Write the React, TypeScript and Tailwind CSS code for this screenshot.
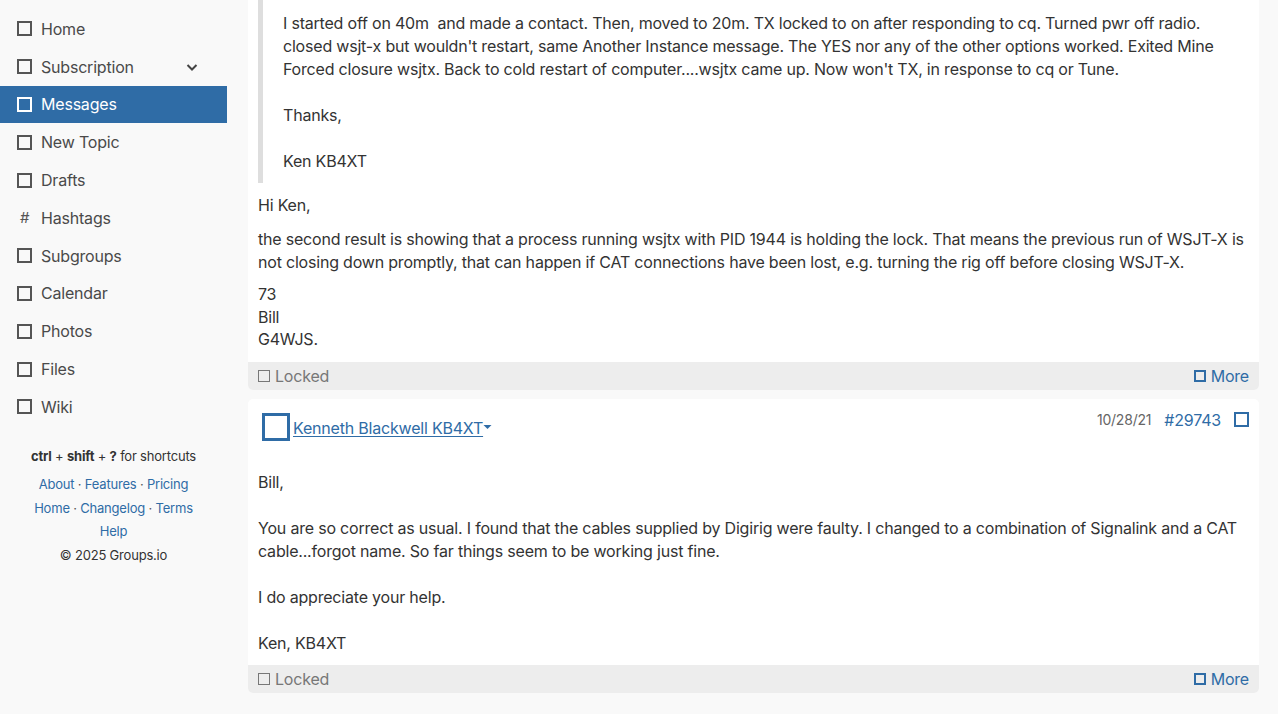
import React from "react";

const Box = ({ cls }: { cls: string }) => <span className={`inline-block shrink-0 ${cls}`} />;

const navItems = [
  "Home",
  "Subscription",
  "Messages",
  "New Topic",
  "Drafts",
  "Hashtags",
  "Subgroups",
  "Calendar",
  "Photos",
  "Files",
  "Wiki",
];

function Sidebar() {
  return (
    <div className="w-[227px] shrink-0 pt-[10px]">
      {navItems.map((n) => {
        const active = n === "Messages";
        return (
          <div
            key={n}
            className={`flex h-[37.8px] items-center pl-[17px] pr-[28px] text-[16px] ${
              active ? "bg-[#2f6ca6] text-white" : "text-[#4a4a4a]"
            }`}
          >
            {n === "Hashtags" ? (
              <span className="w-[15px] text-center text-[15px] italic text-[#555]">#</span>
            ) : (
              <Box
                cls={`w-[15px] h-[15px] border-2 ${active ? "border-white" : "border-[#555]"}`}
              />
            )}
            <span className="ml-[9px] flex-1">{n}</span>
            {n === "Subscription" && (
              <svg width="14" height="14" viewBox="0 0 14 14" fill="none">
                <path d="M2.5 5l4.5 4.5L11.5 5" stroke="#444" strokeWidth="2" />
              </svg>
            )}
          </div>
        );
      })}
      <div className="mt-[19px] text-center text-[13px] leading-[23.5px] text-[#333]">
        <div>
          <b>ctrl</b> + <b>shift</b> + <b>?</b> for shortcuts
        </div>
        <div className="mt-[5px] text-[#2f6ca6]">
          About <span className="text-[#555]">·</span> Features <span className="text-[#555]">·</span> Pricing
        </div>
        <div className="text-[#2f6ca6]">
          Home <span className="text-[#555]">·</span> Changelog <span className="text-[#555]">·</span> Terms
        </div>
        <div className="text-[#2f6ca6]">Help</div>
        <div>© 2025 Groups.io</div>
      </div>
    </div>
  );
}

function Footer() {
  return (
    <div className="flex h-[28px] items-center justify-between rounded-b-[5px] bg-[#ededed] px-[10px] text-[16px]">
      <div className="flex items-center text-[#777]">
        <Box cls="w-[12px] h-[12px] border-[1.5px] border-[#777]" />
        <span className="ml-[5px]">Locked</span>
      </div>
      <div className="flex items-center text-[#2f6ca6]">
        <Box cls="w-[12px] h-[12px] border-2 border-[#2f6ca6]" />
        <span className="ml-[5px]">More</span>
      </div>
    </div>
  );
}

export default function App() {
  return (
    <div
      className="flex min-h-[714px] bg-[#f9f9f9] tracking-[-0.2px] text-[#333]"
      style={{ fontFamily: "Inter, 'Noto Sans', sans-serif" }}
    >
      <Sidebar />
      <div className="ml-[21px] mr-[19px] flex-1">
        <div className="rounded-b-[5px] bg-white">
          <div className="px-[10px] pb-[12px] text-[16px] leading-[23px]">
            <div className="border-l-[5px] border-[#dedede] pb-[10px] pl-[20px] pt-[12px]">
              I started off on 40m&nbsp; and made a contact. Then, moved to 20m. TX locked to on after responding to cq. Turned pwr off radio.
              <br />
              closed wsjt-x but wouldn't restart, same Another Instance message. The YES nor any of the other options worked. Exited Mine
              <br />
              Forced closure wsjtx. Back to cold restart of computer....wsjtx came up. Now won't TX, in response to cq or Tune.
              <br />
              <br />
              Thanks,
              <br />
              <br />
              Ken KB4XT
            </div>
            <p className="mt-[11px]">Hi Ken,</p>
            <p className="mt-[11px]">
              the second result is showing that a process running wsjtx with PID 1944 is holding the lock. That means the previous run of WSJT-X is
              <br />
              not closing down promptly, that can happen if CAT connections have been lost, e.g. turning the rig off before closing WSJT-X.
            </p>
            <p className="mt-[9px] leading-[22.5px]">
              73
              <br />
              Bill
              <br />
              G4WJS.
            </p>
          </div>
          <div className="-mt-[1px]">
            <Footer />
          </div>
        </div>

        <div className="mt-[9px] rounded-[5px] bg-white">
          <div className="flex items-start justify-between px-[10px] pt-[14px]">
            <div className="flex items-center pl-[4px]">
              <Box cls="w-[28px] h-[28px] border-[3px] border-[#2f6ca6]" />
              <span className="ml-[3px] mt-[2px] text-[16px] text-[#2f6ca6] underline underline-offset-2">
                Kenneth Blackwell KB4XT
              </span>
              <svg width="9" height="6" viewBox="0 0 9 6" className="mt-[1px]">
                <path d="M0.5 1h8L4.5 5z" fill="#2f6ca6" />
              </svg>
            </div>
            <div className="-mt-[5px] flex items-center">
              <span className="text-[14px] text-[#666]">10/28/21</span>
              <span className="ml-[13px] text-[16px] text-[#2f6ca6]">#29743</span>
              <Box cls="ml-[13px] w-[15px] h-[15px] border-2 border-[#2f6ca6]" />
            </div>
          </div>
          <div className="px-[10px] pb-[10px] pt-[30px] text-[16px] leading-[23px]">
            Bill,
            <br />
            <br />
            You are so correct as usual. I found that the cables supplied by Digirig were faulty. I changed to a combination of Signalink and a CAT
            <br />
            cable...forgot name. So far things seem to be working just fine.
            <br />
            <br />
            I do appreciate your help.
            <br />
            <br />
            Ken, KB4XT
          </div>
          <Footer />
        </div>
      </div>
    </div>
  );
}
